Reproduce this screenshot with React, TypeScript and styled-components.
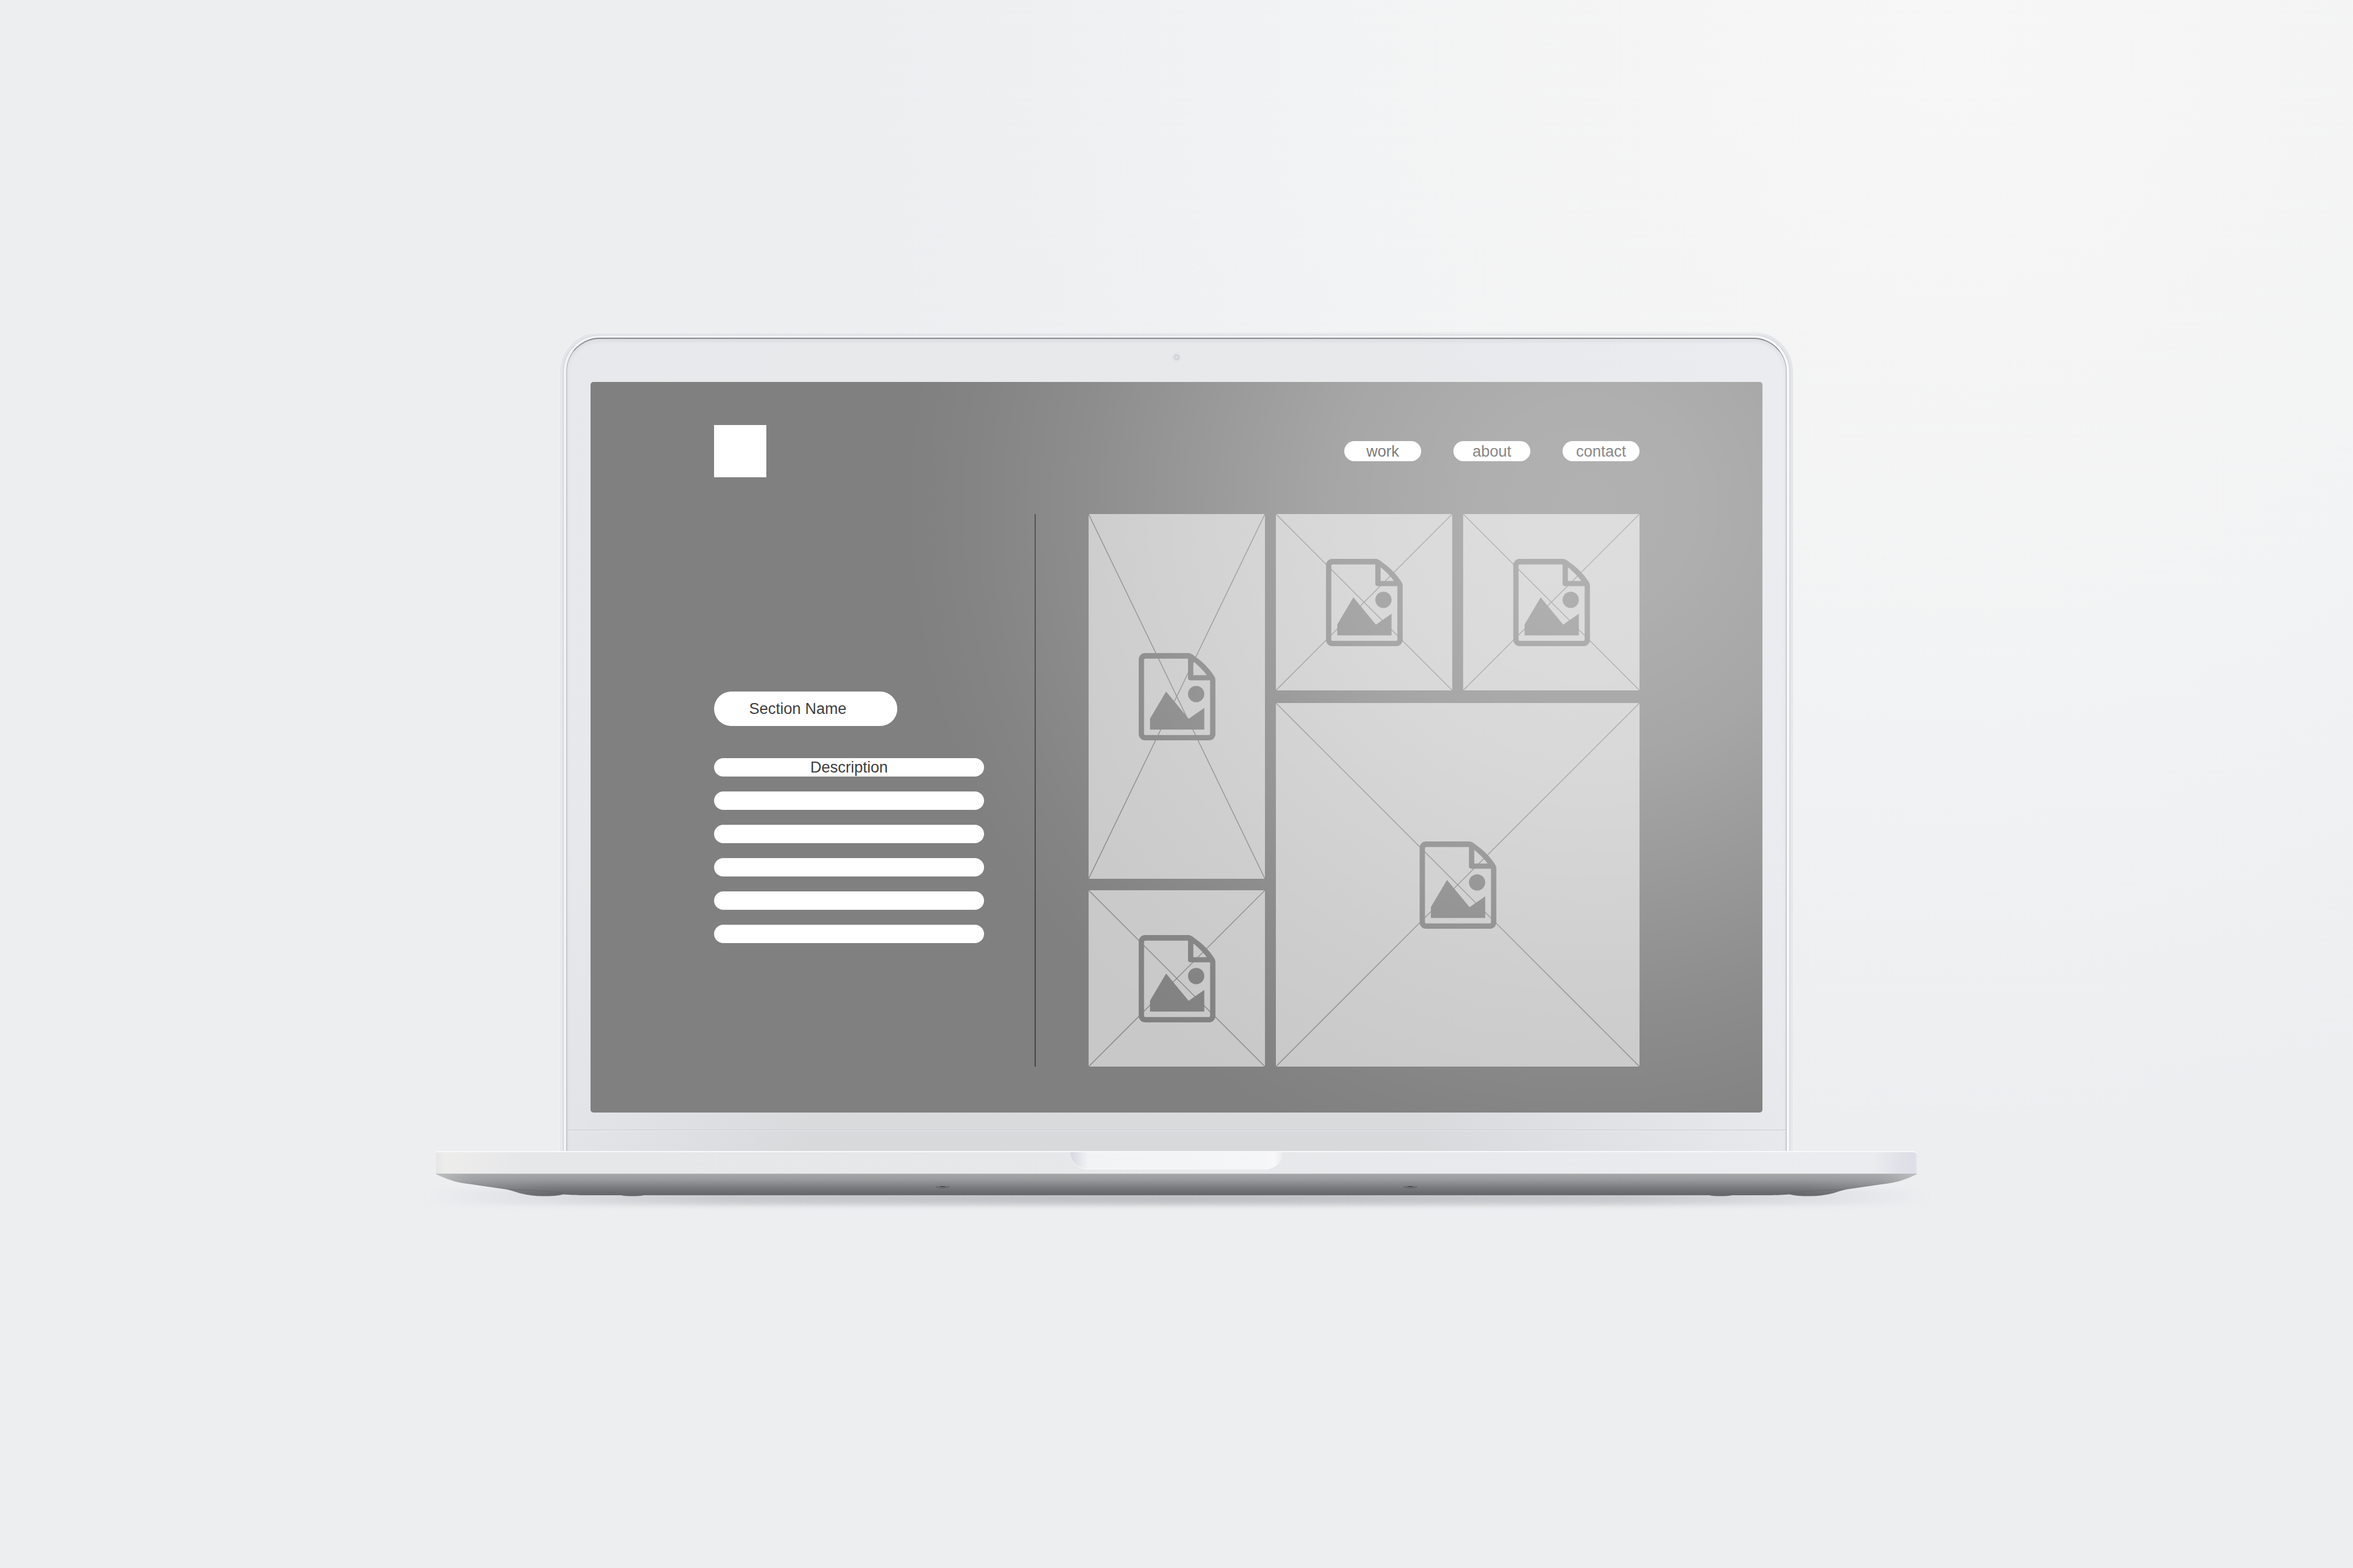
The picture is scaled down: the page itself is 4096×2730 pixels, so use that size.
import React from "react";
import styled, { createGlobalStyle } from "styled-components";

const GlobalStyle = createGlobalStyle`
  * {
    box-sizing: border-box;
  }

  body {
    margin: 0;
    font-family: "Liberation Sans", Arial, sans-serif;
    font-size: 27px;
    line-height: 32px;
  }
`;

const Backdrop = styled.div`
  display: flex;
  flex-direction: column;
  align-items: center;
  min-height: 100vh;
  padding: 577px 48px 0;
  overflow: hidden;
  background:
    radial-gradient(
      circle 1900px at 83% 3%,
      #f7f7f7 0%,
      #f5f5f5 25%,
      #f2f3f4 60%,
      #eff0f1 82%,
      #edeef0 100%
    );
`;

const Laptop = styled.div`
  width: 100%;
  max-width: 2578px;
`;

const Lid = styled.div`
  margin: 0 215px;
  padding: 5px 5px 0;
  border: 1px solid #f1f2f3;
  border-bottom: 0;
  border-radius: 70px 70px 0 0;
  background: linear-gradient(180deg, #eeeff1 0, #e4e5e8 6px, #e7e8ea 100%);
`;

const LidRim = styled.div`
  padding: 4px 5px 0;
  border: 1px solid #c9cbd0;
  border-top-color: #d3d5d9;
  border-bottom: 0;
  border-radius: 64px 64px 0 0;
  background: linear-gradient(90deg, #f1f2f5, #f0f1f3 50%, #f6f7fa);
`;

const Panel = styled.div`
  border: 1px solid #a8abb1;
  border-top: 2px solid #85878b;
  border-bottom: 0;
  border-radius: 58px 58px 0 0;
  background:
    linear-gradient(
      90deg,
      rgba(232, 233, 236, 0.7),
      rgba(232, 233, 236, 0) 20%,
      rgba(236, 237, 242, 0) 70%,
      rgba(236, 237, 242, 0.8)
    ),
    linear-gradient(180deg, #e8e9eb, #e6e7e9 60%, #d8d9db);
  box-shadow: inset 0 4px 6px rgba(120, 122, 128, 0.12);
`;

const TopBezel = styled.div`
  display: flex;
  justify-content: center;
  height: 75px;
  padding-top: 24px;
`;

const Camera = styled.span`
  width: 16px;
  height: 16px;
  border: 1px solid #dfe0e2;
  border-radius: 50%;
  background: radial-gradient(circle, #f0f0f1 0 1px, #d3d4d7 2px 5px, #e8e9eb 6px);
`;

const Chin = styled.div`
  height: 30px;
`;

const Hinge = styled.div`
  height: 37px;
  border-top: 1px solid #c6c7ca;
  box-shadow: inset 0 1px 0 #eeeff1;
`;

const Screen = styled.main`
  position: relative;
  margin: 0 41px;
  padding: 75px 214px 80px 215px;
  overflow: hidden;
  border-radius: 5px;
  background: #808080;

  &::after {
    content: "";
    position: absolute;
    inset: 0;
    pointer-events: none;
    background: radial-gradient(
      circle 1190px at 85% 17%,
      rgba(255, 255, 255, 0.39) 0%,
      rgba(255, 255, 255, 0.37) 16%,
      rgba(255, 255, 255, 0.3) 37%,
      rgba(255, 255, 255, 0.2) 56%,
      rgba(255, 255, 255, 0.1) 74%,
      rgba(255, 255, 255, 0.03) 90%,
      rgba(255, 255, 255, 0) 100%
    );
  }
`;

const Header = styled.header`
  display: flex;
  align-items: center;
  justify-content: space-between;
  margin-bottom: 64px;
`;

const Logo = styled.div`
  width: 91px;
  height: 91px;
  background: #ffffff;
`;

const Nav = styled.nav`
  display: flex;
  gap: 56px;
`;

const NavLink = styled.a`
  display: flex;
  align-items: center;
  justify-content: center;
  width: 134px;
  height: 35px;
  border-radius: 18px;
  background: #ffffff;
  color: #404040;
  text-decoration: none;
`;

const Content = styled.div`
  display: flex;
`;

const Sidebar = styled.section`
  flex: 0 0 470px;
  padding-top: 309px;
`;

const SectionName = styled.h1`
  display: flex;
  align-items: center;
  width: 319px;
  height: 60px;
  margin: 0 0 56px;
  padding-left: 61px;
  border-radius: 30px;
  background: #ffffff;
  color: #404040;
  font-size: 27px;
  font-weight: 400;
`;

const Description = styled.div`
  display: grid;
  gap: 26px;
`;

const DescriptionLine = styled.p`
  height: 32px;
  margin: 0;
  border-radius: 16px;
  background: #ffffff;
  color: #404040;
  text-align: center;
`;

const Divider = styled.div`
  flex: 0 0 2px;
  margin: 0 92px 0 88px;
  background: #454545;
`;

const Gallery = styled.section`
  flex: 1;
  display: grid;
  grid-template-columns: repeat(3, 1fr);
  gap: 19px;
`;

const NarrowColumn = styled.div`
  display: flex;
  flex-direction: column;
  gap: 20px;
`;

const WideColumn = styled.div`
  grid-column: span 2;
  display: grid;
  grid-template-columns: 1fr 1fr;
  gap: 22px 19px;
`;

const Card = styled.figure<{ $shape?: "square" | "tall" | "large" }>`
  position: relative;
  display: grid;
  place-items: center;
  margin: 0;
  background: #c8c8c8;
  ${({ $shape = "square" }) => ($shape === "tall" ? "flex: 1;" : "aspect-ratio: 1;")}
  ${({ $shape }) => $shape === "large" && "grid-column: span 2;"}
`;

const Diagonals = styled.svg`
  position: absolute;
  inset: 0;
  width: 100%;
  height: 100%;
  stroke: #858585;
  stroke-width: 1.5;
`;

const FileIcon = styled.svg`
  position: relative;
  width: 134px;
  height: 152px;
  fill: #808080;
`;

const Base = styled.div`
  display: flex;
  justify-content: center;
  height: 40px;
  border-top: 2px solid #f9f9fb;
  border-bottom: 1px solid #c9cacc;
  border-radius: 4px 7px 0 0;
  background: linear-gradient(
    90deg,
    #e6e6e6 0,
    #ededec 16px,
    #ebebeb 60px,
    #e6e7e9 150px,
    #e7e8ea 55%,
    #ebecf0 94%,
    #ebecf0 97%,
    #dfe1e8 99%,
    #dcdfe8 calc(100% - 4px),
    #e6e7ec 100%
  );
`;

const Notch = styled.div`
  width: 370px;
  height: 30px;
  border-bottom: 1px solid #f9f9fa;
  border-radius: 0 0 34px 34px;
  background: linear-gradient(
    90deg,
    #d5d7df 0,
    #e2e4ea 14px,
    #f2f3f5 32px,
    #f3f4f6 50%,
    #f5f6f8 340px,
    #f8f8f9 355px,
    #ececee 100%
  );
`;

const Underside = styled.svg`
  display: block;
  width: 100%;
  height: 80px;
  overflow: visible;
`;

function ImageCard({ shape }: { shape?: "square" | "tall" | "large" }) {
  return (
    <Card $shape={shape}>
      <Diagonals viewBox="0 0 100 100" preserveAspectRatio="none">
        <line x1="0" y1="0" x2="100" y2="100" vectorEffect="non-scaling-stroke" />
        <line x1="100" y1="0" x2="0" y2="100" vectorEffect="non-scaling-stroke" />
      </Diagonals>
      <FileIcon viewBox="0 0 490 558">
        <path
          fillRule="evenodd"
          d="M40 0H318C334 0 350 14 377 35C402 54 415 66 432 84C450 103 461 116 472 132C483 147 490 158 490 172V518A40 40 0 0 1 450 558H40A40 40 0 0 1 0 518V40A40 40 0 0 1 40 0Z
             M42 36A8 8 0 0 0 34 44V516A8 8 0 0 0 42 524H448A8 8 0 0 0 456 516V174H329A14 14 0 0 1 315 160V36Z
             M349 54V141H434C415 114 380 78 349 54Z"
        />
        <circle cx="367" cy="262" r="52" />
        <path d="M72 419L175 246L319 420L419 351V489H72Z" />
      </FileIcon>
    </Card>
  );
}

function LaptopUnderside() {
  return (
    <Underside viewBox="0 0 2578 80" preserveAspectRatio="none">
      <defs>
        <linearGradient id="metal" x1="0" y1="0" x2="0" y2="1">
          <stop offset="0" stopColor="#a5a7a9" />
          <stop offset="0.28" stopColor="#97999b" />
          <stop offset="0.6" stopColor="#7b7c80" />
          <stop offset="0.85" stopColor="#6a6b6f" />
          <stop offset="1" stopColor="#656669" />
        </linearGradient>
        <linearGradient id="tips" x1="0" y1="0" x2="1" y2="0">
          <stop offset="0" stopColor="#c4c5c6" stopOpacity="0.8" />
          <stop offset="0.025" stopColor="#b0b1b3" stopOpacity="0.3" />
          <stop offset="0.08" stopColor="#a0a1a3" stopOpacity="0" />
          <stop offset="0.92" stopColor="#a0a1a3" stopOpacity="0" />
          <stop offset="0.975" stopColor="#b0b1b3" stopOpacity="0.3" />
          <stop offset="1" stopColor="#c4c5c6" stopOpacity="0.8" />
        </linearGradient>
        <linearGradient id="shade" x1="0" y1="0" x2="1" y2="0">
          <stop offset="0" stopColor="#bcbec3" stopOpacity="0" />
          <stop offset="0.08" stopColor="#bcbec3" stopOpacity="0.3" />
          <stop offset="0.2" stopColor="#bcbec3" stopOpacity="0.75" />
          <stop offset="0.5" stopColor="#bfc0c4" />
          <stop offset="0.8" stopColor="#bcbec3" stopOpacity="0.75" />
          <stop offset="0.92" stopColor="#bcbec3" stopOpacity="0.3" />
          <stop offset="1" stopColor="#bcbec3" stopOpacity="0" />
        </linearGradient>
        <filter id="soften" x="-5%" y="-150%" width="110%" height="400%">
          <feGaussianBlur stdDeviation="6 5" />
        </filter>
      </defs>
      <rect x="-20" y="26" width="2618" height="28" fill="url(#shade)" filter="url(#soften)" />
      {["metal", "tips"].map((paint) => (
        <path
          key={paint}
          fill={`url(#${paint})`}
          d="M0 0C10 5 20 9 33 13C46 16 56 17 69 19L124 27C132 29 138 31 146 33.500C160 37 172 38.500 186 38.500C202 38.500 212 38 222 35.500C232 36 242 37 260 37H322C332 39 352 39 362 37H2216C2226 39 2246 39 2256 37H2318C2336 37 2346 36 2356 35.500C2366 38 2376 38.500 2392 38.500C2406 38.500 2418 37 2432 33.500C2440 31 2446 29 2454 27L2509 19C2522 17 2532 16 2545 13C2558 9 2568 5 2578 0Z"
        />
      ))}
      <path d="M124 27C150 27 190 29 222 33M2454 27C2428 27 2388 29 2356 33" fill="none" stroke="#5c5d61" strokeOpacity="0.5" />
      {[882, 1696].map((x) => (
        <g key={x}>
          <path d={`M${x - 12} 22C${x - 8} 26 ${x + 8} 26 ${x + 12} 22Z`} fill="#737478" stroke="#626367" />
          <ellipse cx={x} cy="22" rx="5" ry="1" fill="#4a4b4f" />
        </g>
      ))}
    </Underside>
  );
}

const navItems = ["work", "about", "contact"];
const descriptionLines = ["Description", "", "", "", "", ""];

export default function App() {
  return (
    <Backdrop>
      <GlobalStyle />
      <Laptop>
        <Lid>
          <LidRim>
            <Panel>
              <TopBezel>
                <Camera />
              </TopBezel>
              <Screen>
                <Header>
                  <Logo />
                  <Nav>
                    {navItems.map((item) => (
                      <NavLink key={item} href={`#${item}`}>
                        {item}
                      </NavLink>
                    ))}
                  </Nav>
                </Header>
                <Content>
                  <Sidebar>
                    <SectionName>Section Name</SectionName>
                    <Description>
                      {descriptionLines.map((line, index) => (
                        <DescriptionLine key={index}>{line}</DescriptionLine>
                      ))}
                    </Description>
                  </Sidebar>
                  <Divider />
                  <Gallery>
                    <NarrowColumn>
                      <ImageCard shape="tall" />
                      <ImageCard />
                    </NarrowColumn>
                    <WideColumn>
                      <ImageCard />
                      <ImageCard />
                      <ImageCard shape="large" />
                    </WideColumn>
                  </Gallery>
                </Content>
              </Screen>
              <Chin />
              <Hinge />
            </Panel>
          </LidRim>
        </Lid>
        <Base>
          <Notch />
        </Base>
        <LaptopUnderside />
      </Laptop>
    </Backdrop>
  );
}
